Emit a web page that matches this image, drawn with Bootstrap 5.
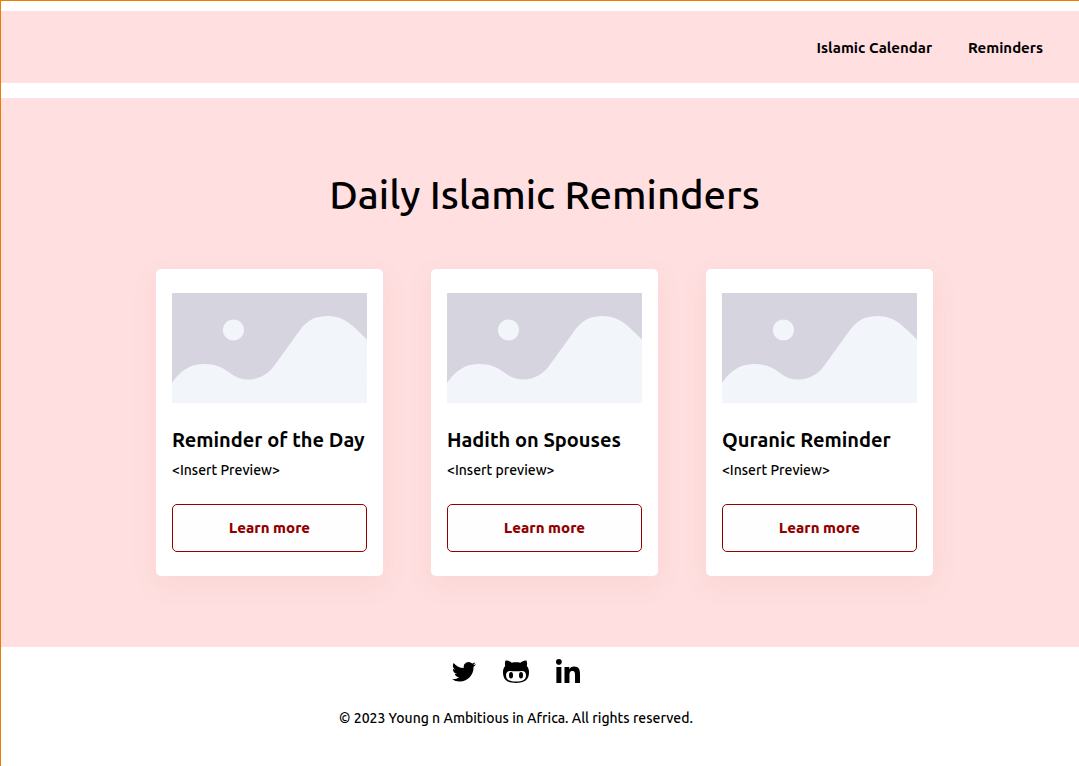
<!DOCTYPE html>
<html lang="en">
<head>
<meta charset="utf-8">
<meta name="viewport" content="width=device-width, initial-scale=1">
<title>Daily Islamic Reminders</title>
<link href="https://cdn.jsdelivr.net/npm/bootstrap@5.3.0/dist/css/bootstrap.min.css" rel="stylesheet">
<style>
  body { font-family: Ubuntu, "Noto Sans", sans-serif; font-size: 14px; line-height: 20px; font-weight: 500; color: #000; background: #fff; }
  .page { border: solid #ea7d00; border-width: 1px 0 0 1px; padding-top: 10px; }
  .blush { background: #ffdfe0; }
  .site-nav { min-height: 72px; margin-bottom: 15px; padding: 2px 36px 0; gap: 36px; }
  .site-nav a { font-size: 15px; line-height: 22px; font-weight: 600; color: #000; text-decoration: none; }
  .reminders { padding: 73px 146px 71px 155px; }
  .reminders h1 { font-size: 40px; line-height: 48px; font-weight: 500; margin-bottom: 50px; }
  .reminder { padding: 24px 16px; border: 0; border-radius: 5px; box-shadow: 0 8px 28px rgba(190, 100, 60, .08); }
  .reminder h2 { font-size: 20px; line-height: 24px; font-weight: 600; margin: 25px 0 8px; white-space: nowrap; }
  .reminder p { margin-bottom: 24px; }
  .btn-more { height: 48px; border: 1px solid #900000; border-radius: 5px; color: #900000; background: #fefefe; font-size: 15px; font-weight: 800; }
  .btn-more:hover { background: #900000; color: #fff; }
  .site-footer { padding: 12px 48px 38px 0; }
  .social { gap: 27px; height: 24px; margin-bottom: 25px; }
  .social a { color: #000; display: flex; }
</style>
</head>
<body>
<div class="page min-vh-100">
  <nav class="site-nav blush d-flex align-items-center justify-content-end">
    <a href="#calendar">Islamic Calendar</a>
    <a href="#reminders">Reminders</a>
  </nav>

  <main class="reminders blush" id="reminders">
    <h1 class="text-center">Daily Islamic Reminders</h1>
    <div class="row row-cols-1 row-cols-md-3 gx-5 gy-4">
      <div class="col">
        <article class="card reminder">
          <svg class="w-100" viewBox="0 0 195 110" aria-hidden="true"><rect width="195" height="110" fill="#d6d4df"/><circle cx="61.5" cy="37" r="10.6" fill="#f2f5fa"/><path fill="#f2f5fa" d="M0 90C11 74 22 71 32.500 71C43 71 50 74 58 80C65 85.500 71 86.500 77 86.500C87 86.500 96 81 102 73L128 37C136 26 145 23 156 23C166 23 175 27 183 35L195 46.500V110H0Z"/></svg>
          <h2>Reminder of the Day</h2>
          <p>&lt;Insert Preview&gt;</p>
          <button type="button" class="btn btn-more w-100">Learn more</button>
        </article>
      </div>
      <div class="col">
        <article class="card reminder">
          <svg class="w-100" viewBox="0 0 195 110" aria-hidden="true"><rect width="195" height="110" fill="#d6d4df"/><circle cx="61.5" cy="37" r="10.6" fill="#f2f5fa"/><path fill="#f2f5fa" d="M0 90C11 74 22 71 32.500 71C43 71 50 74 58 80C65 85.500 71 86.500 77 86.500C87 86.500 96 81 102 73L128 37C136 26 145 23 156 23C166 23 175 27 183 35L195 46.500V110H0Z"/></svg>
          <h2>Hadith on Spouses</h2>
          <p>&lt;Insert preview&gt;</p>
          <button type="button" class="btn btn-more w-100">Learn more</button>
        </article>
      </div>
      <div class="col">
        <article class="card reminder">
          <svg class="w-100" viewBox="0 0 195 110" aria-hidden="true"><rect width="195" height="110" fill="#d6d4df"/><circle cx="61.5" cy="37" r="10.6" fill="#f2f5fa"/><path fill="#f2f5fa" d="M0 90C11 74 22 71 32.500 71C43 71 50 74 58 80C65 85.500 71 86.500 77 86.500C87 86.500 96 81 102 73L128 37C136 26 145 23 156 23C166 23 175 27 183 35L195 46.500V110H0Z"/></svg>
          <h2>Quranic Reminder</h2>
          <p>&lt;Insert Preview&gt;</p>
          <button type="button" class="btn btn-more w-100">Learn more</button>
        </article>
      </div>
    </div>
  </main>

  <footer class="site-footer text-center">
    <div class="social d-flex justify-content-center align-items-center">
      <a href="#twitter" aria-label="Twitter"><svg width="24" height="24" viewBox="0 0 16 16" fill="currentColor"><path d="M5.026 15c6.038 0 9.341-5.003 9.341-9.334 0-.14 0-.282-.006-.422A6.685 6.685 0 0 0 16 3.542a6.658 6.658 0 0 1-1.889.518 3.301 3.301 0 0 0 1.447-1.817 6.533 6.533 0 0 1-2.087.793A3.286 3.286 0 0 0 7.875 6.03a9.325 9.325 0 0 1-6.767-3.429 3.289 3.289 0 0 0 1.018 4.382A3.323 3.323 0 0 1 .64 6.575v.045a3.288 3.288 0 0 0 2.632 3.218 3.203 3.203 0 0 1-.865.115 3.23 3.23 0 0 1-.614-.057 3.283 3.283 0 0 0 3.067 2.277A6.588 6.588 0 0 1 .78 13.58a6.32 6.32 0 0 1-.78-.045A9.344 9.344 0 0 0 5.026 15z"/></svg></a>
      <a href="#github" aria-label="GitHub"><svg width="26" height="24" viewBox="0 0 26 24" fill="currentColor"><path fill-rule="evenodd" d="M2.600 1.600C4.500 1.200 7 2.400 8.800 3.800C11.500 3.200 14.500 3.200 17.200 3.800C19 2.400 21.500 1.200 23.400 1.600C24.300 3.400 24.200 5.400 23.800 7C25.300 8.700 26 10.600 26 13.200C26 21 21.500 23.900 13 23.900S0 21 0 13.200C0 10.600 .7 8.700 2.200 7C1.800 5.400 1.700 3.400 2.600 1.600ZM7.200 12C4.500 12 3 13.600 3 16.200C3 21 6.500 22.500 13 22.500S23 21 23 16.200C23 13.600 21.500 12 18.800 12C17 12 15 12.300 13 12.300S9 12 7.200 12Z"/><ellipse cx="8" cy="16.200" rx="2" ry="3.200"/><ellipse cx="18" cy="16.200" rx="2" ry="3.200"/></svg></a>
      <a href="#linkedin" aria-label="LinkedIn"><svg width="24" height="24" viewBox="0 0 448 448" fill="currentColor"><path d="M100.280 448H7.400V148.900h92.880zM53.790 108.100C24.090 108.100 0 83.500 0 53.800a53.790 53.790 0 0 1 107.580 0c0 29.700-24.100 54.300-53.790 54.300zM447.900 448h-92.680V302.400c0-34.700-.7-79.200-48.290-79.200-48.290 0-55.690 37.700-55.690 76.700V448h-92.780V148.900h89.080v40.800h1.300c12.400-23.500 42.690-48.300 87.880-48.300 94 0 111.280 61.900 111.280 142.300V448z"/></svg></a>
    </div>
    <p class="mb-0">© 2023 Young n Ambitious in Africa. All rights reserved.</p>
  </footer>
</div>
<script src="https://cdn.jsdelivr.net/npm/bootstrap@5.3.0/dist/js/bootstrap.bundle.min.js"></script>
</body>
</html>
